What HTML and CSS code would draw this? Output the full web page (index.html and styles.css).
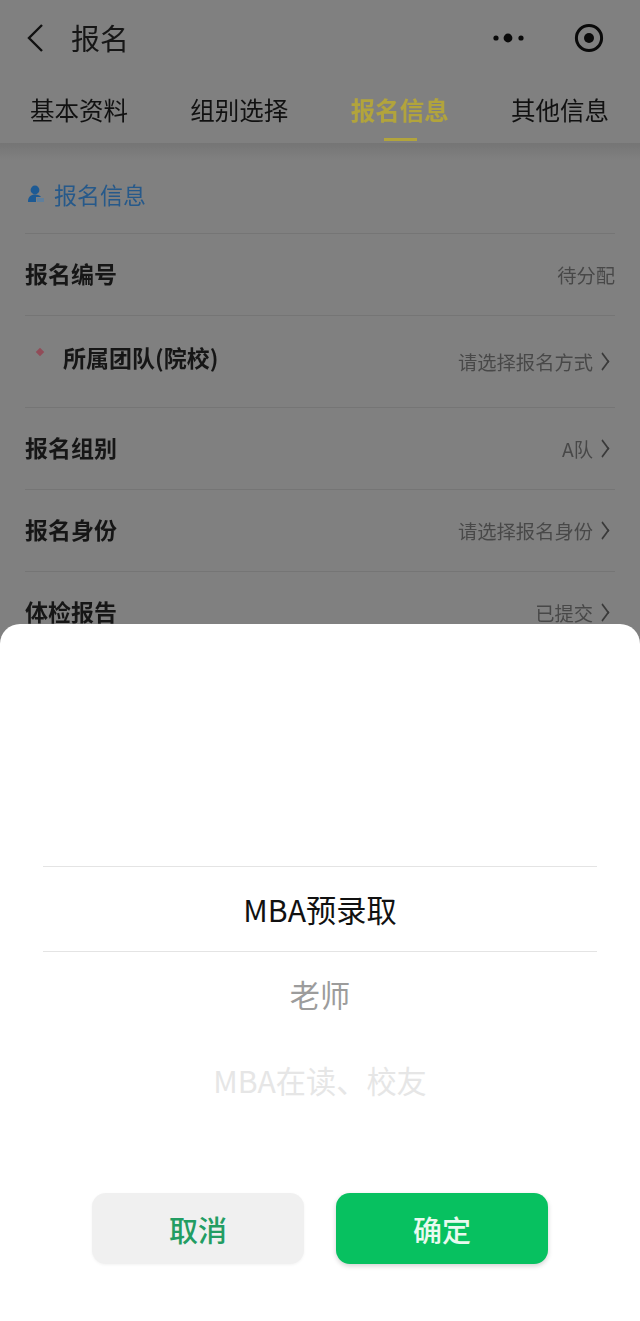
FILE: index.html
```html
<!DOCTYPE html>
<html lang="zh-CN">
<head>
    <meta charset="UTF-8">
    <meta name="viewport" content="width=device-width, initial-scale=1.0">
    <title>报名</title>
    <link rel="stylesheet" href="styles.css">
</head>
<body>
    <div class="page">
        <div class="navbar">
            <svg class="back" width="18" height="30" viewBox="0 0 18 30">
                <path d="M16 2 L3 15 L16 28" fill="none" stroke="#111" stroke-width="2.4"/>
            </svg>
            <span class="nav-title">报名</span>
            <svg class="more" width="32" height="10" viewBox="0 0 32 10">
                <circle cx="3" cy="5" r="2.6" fill="#0a0a0a"/>
                <circle cx="15" cy="5" r="4.4" fill="#0a0a0a"/>
                <circle cx="28" cy="5" r="2.6" fill="#0a0a0a"/>
            </svg>
            <svg class="capsule" width="30" height="30" viewBox="0 0 30 30">
                <circle cx="15" cy="15" r="12.6" fill="none" stroke="#0a0a0a" stroke-width="3"/>
                <circle cx="15" cy="15" r="5" fill="#0a0a0a"/>
            </svg>
        </div>

        <div class="tabs">
            <span class="tab">基本资料</span>
            <span class="tab">组别选择</span>
            <span class="tab active">报名信息</span>
            <span class="tab">其他信息</span>
        </div>

        <div class="content">
            <div class="section-title">
                <svg width="18" height="20" viewBox="0 0 18 20">
                    <circle cx="8" cy="6" r="4.4" fill="#1d5a94"/>
                    <path d="M1 18 C1 12.5 4 10.5 8 10.5 C11 10.5 13 11.5 14 13 L9 13 L9 18 Z" fill="#1d5a94"/>
                    <rect x="10" y="14" width="7" height="4" fill="#5f7f9c"/>
                </svg>
                <span>报名信息</span>
            </div>

            <div class="row">
                <span class="row-label">报名编号</span>
                <span class="row-value">待分配</span>
            </div>
            <div class="row row-tall">
                <span class="row-label required"><i class="star"></i>所属团队(院校)</span>
                <span class="row-value">请选择报名方式<b class="arrow"></b></span>
            </div>
            <div class="row">
                <span class="row-label">报名组别</span>
                <span class="row-value">A队<b class="arrow"></b></span>
            </div>
            <div class="row">
                <span class="row-label">报名身份</span>
                <span class="row-value">请选择报名身份<b class="arrow"></b></span>
            </div>
            <div class="row">
                <span class="row-label">体检报告</span>
                <span class="row-value">已提交<b class="arrow"></b></span>
            </div>
        </div>
    </div>

    <div class="sheet">
        <div class="picker">
            <div class="picker-item selected">MBA预录取</div>
            <div class="picker-item near">老师</div>
            <div class="picker-item far">MBA在读、校友</div>
        </div>
        <div class="buttons">
            <div class="btn btn-cancel">取消</div>
            <div class="btn btn-ok">确定</div>
        </div>
    </div>
</body>
</html>
```

FILE: styles.css
```css
* {
    box-sizing: border-box;
}

html, body {
    margin: 0;
    height: 1321px;
    overflow: hidden;
}

body {
    position: relative;
    background: #808080;
    font-family: "Noto Sans CJK SC", "Noto Sans", sans-serif;
    color: #161616;
}

.page {
    height: 1321px;
    filter: blur(0.4px);
}

.navbar {
    height: 76px;
    display: flex;
    align-items: center;
    padding: 0 36px 0 26px;
}

.nav-title {
    margin: 0 0 2px 27px;
    font-size: 29px;
    line-height: 40px;
    flex: 1;
}

.more {
    margin-right: 49px;
}

.tabs {
    height: 67px;
    display: flex;
    justify-content: space-between;
    padding: 0 31px 0 30px;
}

.tab {
    position: relative;
    font-size: 24.5px;
    line-height: 68px;
    color: #111;
}

.tab.active {
    color: #b2a43c;
    font-weight: 700;
}

.tab.active::after {
    content: "";
    position: absolute;
    left: 33px;
    bottom: 2px;
    width: 33px;
    height: 3px;
    background: #b2a43c;
}

.content {
    padding: 0 25px;
    background: linear-gradient(#757575, #808080 17px);
}

.section-title {
    height: 90px;
    display: flex;
    align-items: center;
    gap: 9px;
    padding: 20px 0 9px 2px;
    font-size: 23px;
    color: #26598a;
}

.row {
    height: 82px;
    display: flex;
    align-items: center;
    justify-content: space-between;
    border-top: 1px solid #757575;
}

.row-tall {
    height: 92px;
}

.row-label {
    margin-bottom: 4px;
    font-size: 23px;
    font-weight: 700;
    color: #161616;
}

.row-tall .row-label {
    margin-bottom: 10px;
}

.required {
    display: flex;
    align-items: center;
    padding-left: 12px;
}

.star {
    width: 6px;
    height: 6px;
    margin: -10px 20px 0 0;
    background: #914c58;
    transform: rotate(45deg);
}

.row-value {
    display: flex;
    align-items: center;
    font-size: 19.3px;
    color: #484848;
}

.arrow {
    width: 13px;
    height: 13px;
    margin: 0 6px 0 3px;
    border-top: 2.5px solid #3a3a3a;
    border-right: 2.5px solid #3a3a3a;
    transform: scaleX(0.75) rotate(45deg);
}

.sheet {
    position: absolute;
    left: 0;
    right: 0;
    top: 624px;
    bottom: 0;
    background: #fff;
    border-radius: 20px 20px 0 0;
    padding-top: 242px;
}

.picker {
    margin: 0 43px;
    text-align: center;
}

.picker-item {
    height: 85.5px;
    font-size: 30.2px;
    line-height: 85px;
}

.selected {
    border-top: 1px solid #e4e4e4;
    border-bottom: 1px solid #e4e4e4;
    height: 86px;
    color: #111;
}

.near {
    color: #9c9c9c;
}

.far {
    color: #e6e6e6;
}

.buttons {
    display: flex;
    justify-content: center;
    gap: 32px;
    margin-top: 70px;
}

.btn {
    width: 212px;
    height: 71px;
    border-radius: 14px;
    font-size: 29px;
    font-weight: 500;
    line-height: 73px;
    text-align: center;
}

.btn-cancel {
    background: #f0f0f0;
    color: #239d63;
    box-shadow: 0 1px 3px rgba(0, 0, 0, 0.05);
}

.btn-ok {
    background: #07c160;
    color: #e8faef;
    box-shadow: 0 2px 5px rgba(0, 0, 0, 0.18);
}
```
